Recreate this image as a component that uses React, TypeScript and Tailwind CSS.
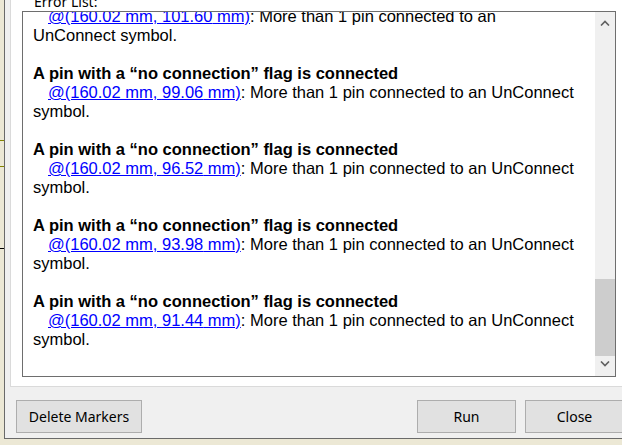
import React from 'react';

const items = ['101.60', '99.06', '96.52', '93.98', '91.44'];

function ErrorItem({ y, first }: { y: string; first?: boolean }) {
  return (
    <div className="mb-[19px]">
      {!first && (
        <div className="font-bold">A pin with a “no connection” flag is connected</div>
      )}
      <p className="indent-[15px]">
        <a href="#" className="text-[#0000ff] underline">
          @(160.02 mm, {y} mm)
        </a>
        : More than 1 pin connected to an UnConnect symbol.
      </p>
    </div>
  );
}

function ScrollBar() {
  return (
    <div className="w-[20px] bg-[#f0f0f0] flex flex-col shrink-0">
      <div className="h-[20px] flex items-center justify-center">
        <svg width="10" height="6" viewBox="0 0 10 6" className="mt-[2px]">
          <path d="M1 5.5 L5 1.5 L9 5.5" fill="none" stroke="#606060" strokeWidth="1.6" />
        </svg>
      </div>
      <div className="flex-1 relative">
        <div className="absolute left-0 right-0 top-[247px] h-[77px] bg-[#cdcdcd]" />
      </div>
      <div className="h-[20px] flex items-center justify-center">
        <svg width="10" height="6" viewBox="0 0 10 6" className="mb-[4px]">
          <path d="M1 0.5 L5 4.5 L9 0.5" fill="none" stroke="#606060" strokeWidth="1.6" />
        </svg>
      </div>
    </div>
  );
}

function Button({ label, w }: { label: string; w: string }) {
  return (
    <button
      type="button"
      className={`${w} h-[33px] bg-[#e1e1e1] border border-[#adadad] text-[14px] text-black font-['Noto_Sans',sans-serif]`}
    >
      {label}
    </button>
  );
}

export default function App() {
  return (
    <div className="w-[622px] h-[445px] bg-[#ece8d5] relative overflow-hidden">
      {/* schematic wires behind the dialog */}
      <div className="absolute left-0 top-[140px] w-[4px] h-px bg-[#848400]" />
      <div className="absolute left-0 top-[166px] w-[4px] h-px bg-[#848400]" />
      <div className="absolute left-0 top-[248px] w-[4px] h-px bg-black" />

      <div className="ml-[4px] w-[630px] h-[439px] bg-[#f0f0f0] border-l border-b border-[#6a6a6a] flex flex-col">
        <div className="ml-[5px] mr-[5px] h-[387px] bg-white border-l border-b border-[#dadada] flex flex-col shrink-0">
          <div className="-mt-[7px] h-[18px] pl-[23px] text-[14px] leading-[18px] text-black font-['Noto_Sans',sans-serif]">
            Error List:
          </div>
          <div className="ml-[11px] w-[594px] h-[366px] border border-[#6e6e6e] flex overflow-hidden">
            <div className="flex-1 overflow-hidden pl-[10px] pr-[19px] text-[16.5px] leading-[19px] text-black font-['Liberation_Sans',Arial,sans-serif]">
              <div className="-mt-[5px]">
                {items.map((y, i) => (
                  <ErrorItem key={y} y={y} first={i === 0} />
                ))}
              </div>
            </div>
            <ScrollBar />
          </div>
        </div>
        <div className="mt-[13px] pl-[11px] pr-[10px] flex items-center">
          <Button label="Delete Markers" w="w-[126px]" />
          <div className="ml-auto flex gap-[9px]">
            <Button label="Run" w="w-[99px]" />
            <Button label="Close" w="w-[99px]" />
          </div>
        </div>
      </div>
    </div>
  );
}
